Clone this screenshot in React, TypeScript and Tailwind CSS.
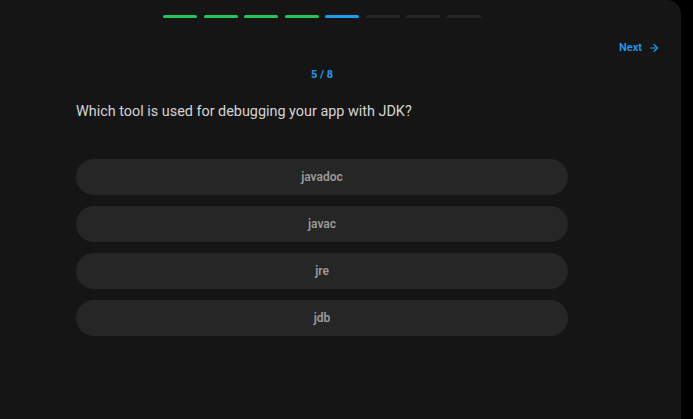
import { ArrowRight } from 'lucide-react';

const steps = ['done', 'done', 'done', 'done', 'current', 'todo', 'todo', 'todo'];
const options = ['javadoc', 'javac', 'jre', 'jdb'];

export default function App() {
  return (
    <div className="h-screen w-full bg-black flex font-['Roboto',sans-serif]">
      <div className="w-[681px] h-full bg-[#151515] rounded-tr-[14px] flex flex-col">
        {/* progress */}
        <div className="ml-[76px] w-[492px] flex justify-center gap-[6.6px] pt-[15px]">
          {steps.map((s, i) => (
            <div
              key={i}
              className={
                'w-[34px] h-[3px] rounded-full ' +
                (s === 'done' ? 'bg-[#22c55e]' : s === 'current' ? 'bg-[#1d9bf0]' : 'bg-[#262626]')
              }
            />
          ))}
        </div>

        {/* next */}
        <div className="flex justify-end pr-[21px] mt-[22px]">
          <button className="flex items-center gap-[6px] text-[11px] leading-4 font-semibold text-[#1d9bf0]">
            Next
            <ArrowRight className="w-[12px] h-[12px]" strokeWidth={2.2} />
          </button>
        </div>

        <div className="ml-[76px] w-[492px] flex flex-col">
          <div className="mt-[11px] text-center text-[11px] leading-4 font-bold text-[#1d9bf0]">5 / 8</div>
          <p className="mt-[19px] text-[14.4px] leading-5 text-[#d4d4d4]">
            Which tool is used for debugging your app with JDK?
          </p>

          <div className="mt-[37px] flex flex-col gap-[11px]">
            {options.map((o) => (
              <button
                key={o}
                className="h-[36px] w-full rounded-full bg-[#262626] text-[12px] font-semibold text-[#9b9b9b]"
              >
                {o}
              </button>
            ))}
          </div>
        </div>
      </div>
    </div>
  );
}
